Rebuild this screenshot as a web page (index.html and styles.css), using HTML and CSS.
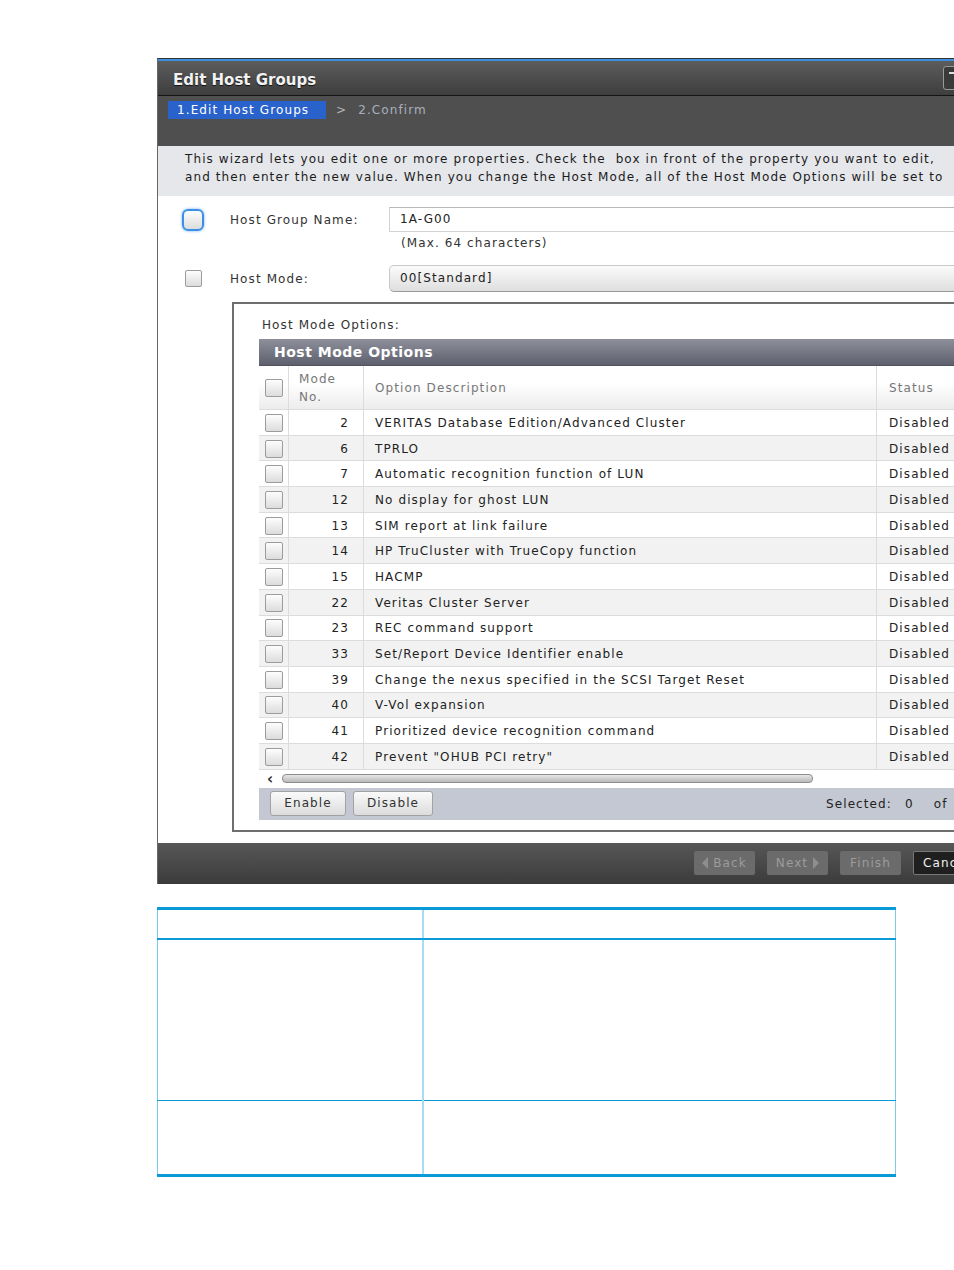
FILE: index.html
```html
<!DOCTYPE html>
<html lang="en">
<head>
    <meta charset="UTF-8">
    <title>Edit Host Groups</title>
    <link rel="stylesheet" href="styles.css">
</head>
<body>

<div class="wizard">
    <div class="titlebar">
        <span class="title">Edit Host Groups</span>
        <span class="help"><span class="help-mark"></span></span>
    </div>
    <div class="steps">
        <span class="step current">1.Edit Host Groups</span>
        <span class="step-sep">&gt;</span>
        <span class="step">2.Confirm</span>
    </div>
    <div class="intro">
        This wizard lets you edit one or more properties. Check the&nbsp; box in front of the property you want to edit,<br>
        and then enter the new value. When you change the Host Mode, all of the Host Mode Options will be set to
    </div>

    <div class="content">
        <div class="field">
            <span class="check-wrap"><span class="check focus"></span></span>
            <span class="field-label">Host Group Name:</span>
            <div class="text-input">1A-G00</div>
        </div>
        <div class="hint">(Max. 64 characters)</div>

        <div class="field field-mode">
            <span class="check-wrap"><span class="check"></span></span>
            <span class="field-label">Host Mode:</span>
            <div class="select">00[Standard]</div>
        </div>

        <div class="options-box">
            <div class="options-label">Host Mode Options:</div>
            <div class="panel">
                <div class="panel-head">Host Mode Options</div>
                <div class="grid">
                    <div class="row head">
                        <div class="c-check"><span class="check small"></span></div>
                        <div class="c-no">Mode<br>No.</div>
                        <div class="c-desc">Option Description</div>
                        <div class="c-status">Status</div>
                    </div>
                    <div class="row"><div class="c-check"><span class="check small"></span></div><div class="c-no">2</div><div class="c-desc">VERITAS Database Edition/Advanced Cluster</div><div class="c-status">Disabled</div></div>
                    <div class="row alt"><div class="c-check"><span class="check small"></span></div><div class="c-no">6</div><div class="c-desc">TPRLO</div><div class="c-status">Disabled</div></div>
                    <div class="row"><div class="c-check"><span class="check small"></span></div><div class="c-no">7</div><div class="c-desc">Automatic recognition function of LUN</div><div class="c-status">Disabled</div></div>
                    <div class="row alt"><div class="c-check"><span class="check small"></span></div><div class="c-no">12</div><div class="c-desc">No display for ghost LUN</div><div class="c-status">Disabled</div></div>
                    <div class="row"><div class="c-check"><span class="check small"></span></div><div class="c-no">13</div><div class="c-desc">SIM report at link failure</div><div class="c-status">Disabled</div></div>
                    <div class="row alt"><div class="c-check"><span class="check small"></span></div><div class="c-no">14</div><div class="c-desc">HP TruCluster with TrueCopy function</div><div class="c-status">Disabled</div></div>
                    <div class="row"><div class="c-check"><span class="check small"></span></div><div class="c-no">15</div><div class="c-desc">HACMP</div><div class="c-status">Disabled</div></div>
                    <div class="row alt"><div class="c-check"><span class="check small"></span></div><div class="c-no">22</div><div class="c-desc">Veritas Cluster Server</div><div class="c-status">Disabled</div></div>
                    <div class="row"><div class="c-check"><span class="check small"></span></div><div class="c-no">23</div><div class="c-desc">REC command support</div><div class="c-status">Disabled</div></div>
                    <div class="row alt"><div class="c-check"><span class="check small"></span></div><div class="c-no">33</div><div class="c-desc">Set/Report Device Identifier enable</div><div class="c-status">Disabled</div></div>
                    <div class="row"><div class="c-check"><span class="check small"></span></div><div class="c-no">39</div><div class="c-desc">Change the nexus specified in the SCSI Target Reset</div><div class="c-status">Disabled</div></div>
                    <div class="row alt"><div class="c-check"><span class="check small"></span></div><div class="c-no">40</div><div class="c-desc">V-Vol expansion</div><div class="c-status">Disabled</div></div>
                    <div class="row"><div class="c-check"><span class="check small"></span></div><div class="c-no">41</div><div class="c-desc">Prioritized device recognition command</div><div class="c-status">Disabled</div></div>
                    <div class="row alt"><div class="c-check"><span class="check small"></span></div><div class="c-no">42</div><div class="c-desc">Prevent "OHUB PCI retry"</div><div class="c-status">Disabled</div></div>
                </div>
                <div class="hscroll">
                    <span class="arrow">&lsaquo;</span>
                    <span class="track"></span>
                </div>
                <div class="panel-bar">
                    <span class="btn btn-enable">Enable</span>
                    <span class="btn btn-disable">Disable</span>
                    <span class="selected">Selected:<span class="sel-count">0</span><span class="sel-of">of</span></span>
                </div>
            </div>
        </div>
    </div>

    <div class="footer">
        <span class="fbtn off"><span class="tri left"></span>Back</span>
        <span class="fbtn off">Next<span class="tri right"></span></span>
        <span class="fbtn off">Finish</span>
        <span class="fbtn cancel">Cancel</span>
    </div>
</div>

<table class="doc-table">
    <tr class="doc-head"><td class="doc-c1"></td><td></td></tr>
    <tr class="doc-r1"><td class="doc-c1"></td><td></td></tr>
    <tr class="doc-r2"><td class="doc-c1"></td><td></td></tr>
</table>

</body>
</html>
```

FILE: styles.css
```css
body{
    margin: 0;
    background: #fff;
    font-family: "DejaVu Sans", Verdana, sans-serif;
    font-size: 12px;
    letter-spacing: 1.1px;
    color: #222;
}
.wizard{
    width: 797px;
    margin: 58px 0 0 157px;
    overflow: hidden;
    border-top: 1px solid #333;
    border-left: 1px solid #666;
    background: #fff;
}
.titlebar{
    height: 31px;
    padding: 3px 0 0 15px;
    border-top: 2px solid #3d8fe0;
    border-bottom: 1px solid #151515;
    background: linear-gradient(#5c5c5c, #3e3e3e);
    display: flex;
    align-items: center;
}
.title{
    color: #f2f2f2;
    font-size: 15px;
    font-weight: bold;
    letter-spacing: 0;
    text-shadow: 0 1px 1px #111;
}
.help{
    margin-left: auto;
    margin-right: -8px;
    margin-top: -3px;
    width: 20px;
    height: 24px;
    box-sizing: border-box;
    border: 1px solid #9a9a9a;
    border-radius: 3px;
    background: #3a3a3a;
    display: flex;
    justify-content: center;
    padding-top: 5px;
}
.help-mark{
    width: 8px;
    height: 2px;
    background: #ddd;
}
.steps{
    height: 50px;
    background: #4f4f4f;
    display: flex;
    align-items: flex-start;
    padding: 5px 0 0 10px;
    box-sizing: border-box;
}
.step{
    color: #a9b0bb;
    line-height: 18px;
}
.step.current{
    width: 158px;
    box-sizing: border-box;
    padding-left: 9px;
    background: #2a62cc;
    color: #fff;
}
.step-sep{
    color: #b5b5b5;
    line-height: 18px;
    margin: 0 11px 0 10px;
}
.intro{
    height: 50px;
    box-sizing: border-box;
    padding: 4px 0 0 27px;
    background: #e5e7eb;
    line-height: 18px;
    white-space: nowrap;
    color: #1c1c1c;
}
.content{
    padding-top: 11px;
}
.field{
    display: flex;
    align-items: center;
    height: 25px;
}
.field > *{
    flex-shrink: 0;
}
.check-wrap{
    width: 24px;
    margin-left: 23px;
    display: flex;
    justify-content: center;
}
.field-label{
    margin-left: 25px;
    width: 159px;
    color: #333;
    white-space: nowrap;
}
.check{
    display: inline-block;
    width: 17px;
    height: 17px;
    box-sizing: border-box;
    border: 1px solid #9c9c9c;
    border-radius: 2px;
    background: linear-gradient(#fdfdfd, #dcdcdc);
}
.check.focus{
    width: 22px;
    height: 22px;
    border: 2px solid #3c8ee6;
    border-radius: 6px;
    box-shadow: 0 0 3px #6fb0f5;
}
.text-input{
    width: 620px;
    height: 25px;
    box-sizing: border-box;
    border: 1px solid #d2d2d2;
    border-top-color: #b9b9b9;
    padding-left: 10px;
    line-height: 23px;
    color: #222;
}
.hint{
    margin: 4px 0 0 243px;
    line-height: 14px;
    color: #333;
}
.field-mode{
    height: 27px;
    margin-top: 15px;
}
.select{
    width: 620px;
    height: 27px;
    box-sizing: border-box;
    border: 1px solid #c8c8c8;
    border-bottom-color: #9a9a9a;
    border-radius: 5px;
    background: linear-gradient(#fbfbfb, #dedede);
    padding-left: 10px;
    line-height: 25px;
    color: #222;
}
.options-box{
    width: 780px;
    margin: 10px 0 0 74px;
    border: 2px solid #6e6e6e;
    padding: 0 0 10px 25px;
    box-sizing: border-box;
}
.options-label{
    padding: 14px 0 0 3px;
    height: 35px;
    box-sizing: border-box;
    color: #333;
}
.panel{
    width: 740px;
}
.panel-head{
    height: 27px;
    background: linear-gradient(#8d909b, #5e616d);
    border-bottom: 1px solid #50525c;
    box-sizing: border-box;
    color: #fff;
    font-size: 14px;
    font-weight: bold;
    letter-spacing: 0.5px;
    line-height: 27px;
    padding-left: 15px;
}
.row{
    display: flex;
    height: 25.7px;
    box-sizing: border-box;
    border-bottom: 1px solid #dcdcdc;
    background: #fff;
    align-items: stretch;
}
.row.alt{
    background: #f2f2f2;
}
.row > div{
    display: flex;
    align-items: center;
    box-sizing: border-box;
    white-space: nowrap;
    flex-shrink: 0;
    padding-top: 1px;
}
.c-check{
    width: 30px;
    justify-content: center;
    border-right: 1px solid #dcdcdc;
}
.c-no{
    width: 75px;
    justify-content: flex-end;
    padding-right: 14px;
    border-right: 1px solid #dcdcdc;
}
.c-desc{
    width: 513px;
    padding-left: 11px;
    border-right: 1px solid #dcdcdc;
}
.c-status{
    width: 122px;
    padding-left: 12px;
}
.check.small{
    width: 18px;
    height: 18px;
}
.row.head{
    height: 44px;
    background: linear-gradient(#fff 40%, #ececec);
    color: #777;
}
.row.head .c-no{
    justify-content: flex-start;
    padding: 0 0 0 10px;
    line-height: 18px;
}
.hscroll{
    height: 18px;
    display: flex;
    align-items: center;
}
.arrow{
    width: 23px;
    padding-left: 8px;
    box-sizing: border-box;
    font-size: 15px;
    font-weight: bold;
    color: #333;
}
.track{
    width: 531px;
    height: 9px;
    box-sizing: border-box;
    border: 1px solid #8d8d8d;
    border-radius: 4px;
    background: linear-gradient(#e6e6e6, #b9b9b9);
}
.panel-bar{
    height: 32px;
    background: #c4c8d2;
    display: flex;
    align-items: center;
    padding-left: 11px;
    gap: 7px;
}
.panel-bar > *{
    flex-shrink: 0;
}
.btn{
    height: 25px;
    line-height: 23px;
    box-sizing: border-box;
    text-align: center;
    border: 1px solid #a2a2a2;
    border-radius: 3px;
    background: linear-gradient(#fafafa, #dcdcdc);
    color: #333;
}
.btn-enable{
    width: 76px;
}
.btn-disable{
    width: 80px;
}
.selected{
    margin-left: 386px;
    color: #222;
    white-space: nowrap;
}
.sel-count{
    margin-left: 13px;
}
.sel-of{
    margin-left: 20px;
}
.footer{
    margin-top: 11px;
    height: 41px;
    background: linear-gradient(#575757, #3b3b3b);
    display: flex;
    align-items: center;
    padding-left: 536px;
    gap: 12px;
}
.fbtn{
    flex-shrink: 0;
    height: 24px;
    line-height: 24px;
    box-sizing: border-box;
    border-radius: 2px;
    display: flex;
    align-items: center;
    justify-content: center;
    gap: 5px;
    white-space: nowrap;
}
.fbtn.off{
    background: #6b6b6b;
    color: #9c9c9c;
    width: 61px;
}
.fbtn.cancel{
    width: 70px;
    justify-content: flex-start;
    padding-left: 9px;
    background: #1f1f1f;
    border: 1px solid #777;
    color: #f0f0f0;
}
.tri{
    width: 0;
    height: 0;
    border-top: 6px solid transparent;
    border-bottom: 6px solid transparent;
}
.tri.left{
    border-right: 6px solid #8e8e8e;
}
.tri.right{
    border-left: 6px solid #8e8e8e;
}
.doc-table{
    width: 739px;
    margin: 23px 0 0 157px;
    border-collapse: collapse;
    border-left: 1px solid #7ccaee;
    border-right: 1px solid #7ccaee;
}
.doc-table td{
    padding: 0;
}
.doc-c1{
    width: 264px;
    border-right: 2px solid #a8dcf2;
}
.doc-head td{
    height: 28px;
    border-top: 3px solid #0a9ad8;
    border-bottom: 2px solid #0a9ad8;
}
.doc-r1 td{
    height: 160px;
    border-bottom: 1px solid #0a9ad8;
}
.doc-r2 td{
    height: 73px;
    border-bottom: 3px solid #0a9ad8;
}
```
